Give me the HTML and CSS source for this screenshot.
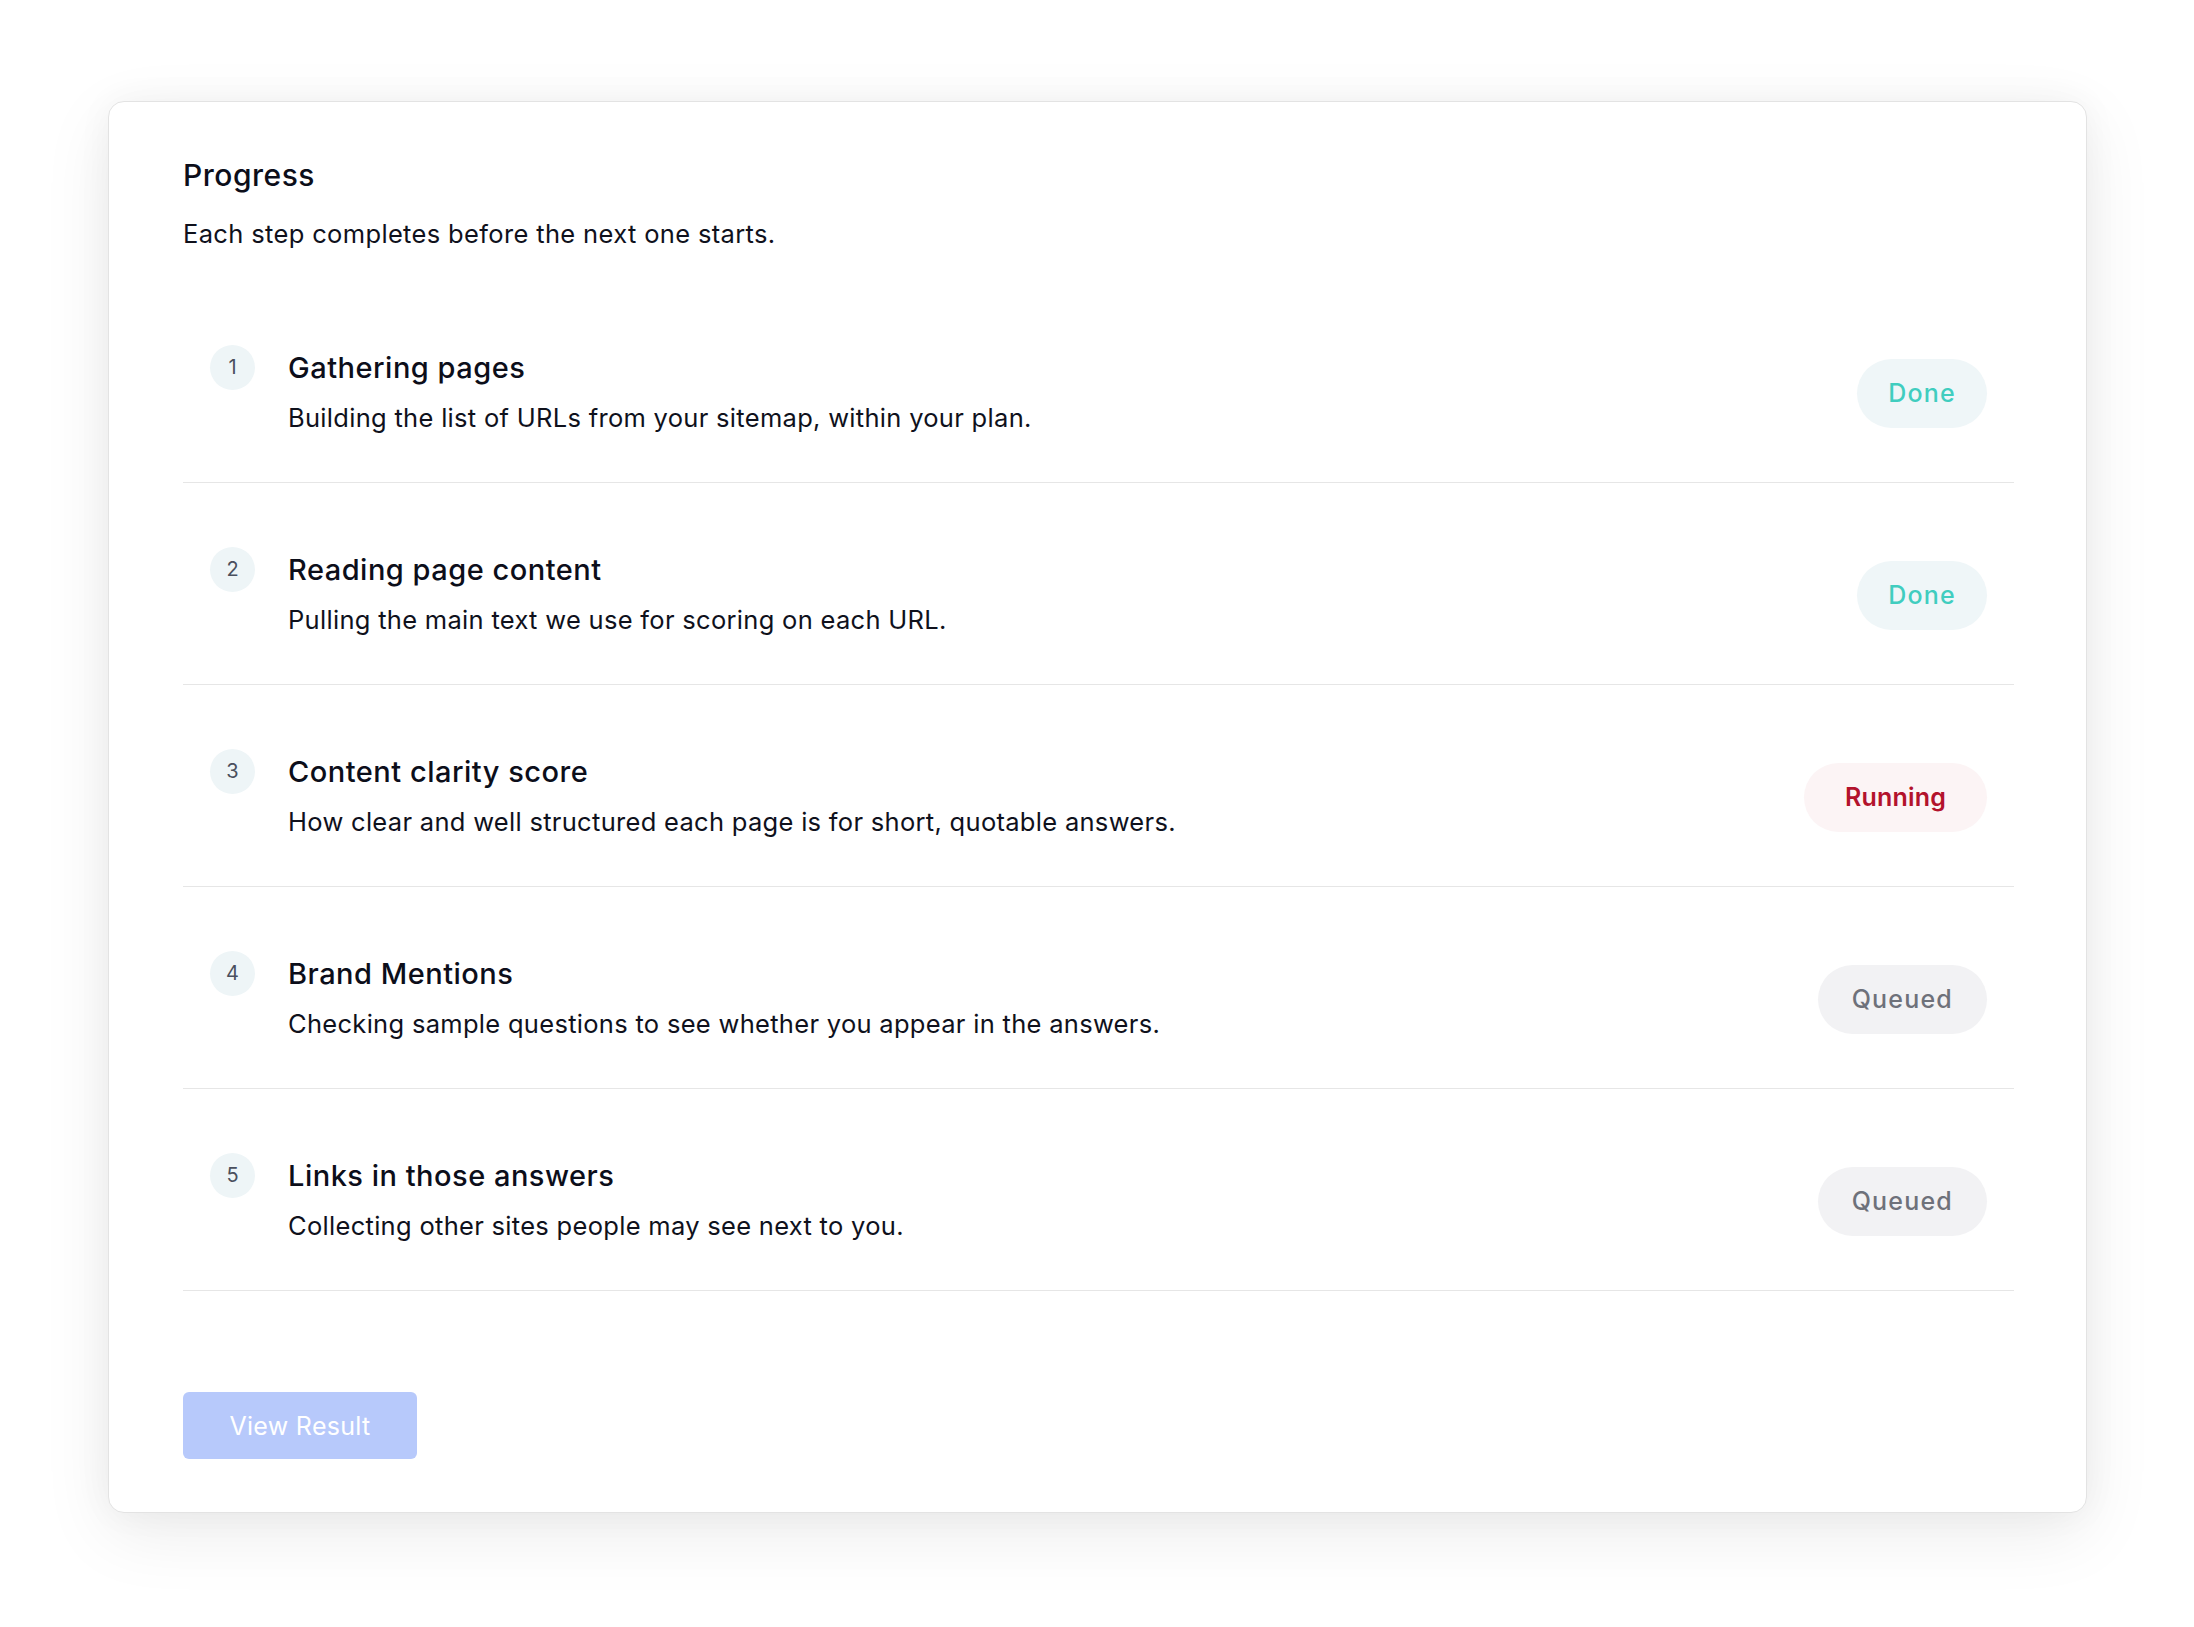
FILE: index.html
```html
<!DOCTYPE html>
<html lang="en">
<head>
<meta charset="utf-8">
<title>Progress</title>
<link rel="stylesheet" href="styles.css">
</head>
<body>
<main class="page">
  <section class="card">
    <h2 class="card-title">Progress</h2>
    <p class="card-sub">Each step completes before the next one starts.</p>
    <ol class="steps">
      <li class="step">
        <span class="step-num">1</span>
        <div class="step-body">
          <div class="step-title">Gathering pages</div>
          <div class="step-desc">Building the list of URLs from your sitemap, within your plan.</div>
        </div>
        <span class="badge badge-done">Done</span>
      </li>
      <li class="step">
        <span class="step-num">2</span>
        <div class="step-body">
          <div class="step-title">Reading page content</div>
          <div class="step-desc">Pulling the main text we use for scoring on each URL.</div>
        </div>
        <span class="badge badge-done">Done</span>
      </li>
      <li class="step">
        <span class="step-num">3</span>
        <div class="step-body">
          <div class="step-title">Content clarity score</div>
          <div class="step-desc">How clear and well structured each page is for short, quotable answers.</div>
        </div>
        <span class="badge badge-running">Running</span>
      </li>
      <li class="step">
        <span class="step-num">4</span>
        <div class="step-body">
          <div class="step-title">Brand Mentions</div>
          <div class="step-desc">Checking sample questions to see whether you appear in the answers.</div>
        </div>
        <span class="badge badge-queued">Queued</span>
      </li>
      <li class="step">
        <span class="step-num">5</span>
        <div class="step-body">
          <div class="step-title">Links in those answers</div>
          <div class="step-desc">Collecting other sites people may see next to you.</div>
        </div>
        <span class="badge badge-queued">Queued</span>
      </li>
    </ol>
    <button class="btn-result" type="button">View Result</button>
  </section>
</main>
</body>
</html>
```
FILE: styles.css
```css
html, body {
  margin: 0;
  padding: 0;
  background: #ffffff;
}
body {
  font-family: "Inter", "Noto Sans", sans-serif;
  color: #0f111c;
}
.page {
  padding: 101px 107px 113px 108px;
}
.card {
  background: #ffffff;
  border: 1px solid #e3e3e3;
  border-radius: 16px;
  padding: 53px 72px 53px 74px;
  box-shadow: 0 20px 70px rgba(0, 0, 0, 0.08), 0 0 36px rgba(0, 0, 0, 0.045);
}
.card-title {
  margin: 0;
  font-size: 30px;
  line-height: 40px;
  font-weight: 500;
  letter-spacing: 0.5px;
  color: #0c0e1a;
}
.card-sub {
  margin: 21px 0 0;
  font-size: 25.5px;
  line-height: 36px;
  letter-spacing: 0.35px;
  color: #0f111c;
}
.steps {
  list-style: none;
  margin: 29px 0 0;
  padding: 0;
}
.step {
  display: flex;
  align-items: center;
  padding: 69px 27px 46px;
  border-bottom: 1px solid #e6e6e6;
}
.step-num {
  align-self: flex-start;
  flex: none;
  width: 45px;
  height: 45px;
  margin-top: -5px;
  border-radius: 50%;
  background: #eef5f7;
  color: #4a505e;
  font-size: 20px;
  line-height: 45px;
  text-align: center;
}
.step-body {
  flex: 1;
  margin-left: 33px;
  display: flex;
  flex-direction: column;
  gap: 14px;
}
.step-title {
  font-size: 29px;
  line-height: 36px;
  font-weight: 500;
  letter-spacing: 0.5px;
  color: #0c0e1a;
}
.step-desc {
  font-size: 25.5px;
  line-height: 36px;
  letter-spacing: 0.3px;
  color: #0f111c;
}
.badge {
  flex: none;
  height: 69px;
  padding: 0 31px;
  border-radius: 35px;
  font-size: 25px;
  line-height: 69px;
  font-weight: 500;
  letter-spacing: 1.2px;
}
.badge-done {
  background: #eff6f8;
  color: #40cdbf;
}
.badge-running {
  padding: 0 41px;
  background: #fcf4f5;
  color: #b3122c;
  font-weight: 600;
  letter-spacing: 0.2px;
}
.badge-queued {
  padding: 0 34px;
  background: #f2f2f4;
  color: #6e717a;
}
.btn-result {
  display: block;
  margin-top: 101px;
  width: 234px;
  height: 67px;
  border: none;
  border-radius: 6px;
  background: #b7c9fb;
  color: #ffffff;
  font-family: "Inter", "Noto Sans", sans-serif;
  font-size: 25px;
  letter-spacing: 0.3px;
  padding: 0;
  cursor: pointer;
}
```
